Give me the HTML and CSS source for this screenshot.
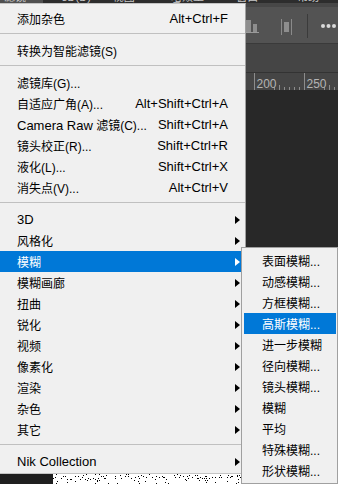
FILE: index.html
```html
<!DOCTYPE html>
<html lang="zh-CN">
  <head>
    <meta charset="UTF-8" />
    <link rel="stylesheet" href="styles.css">
  </head>
  <body>
    <!-- Photoshop workspace behind the menus -->
    <div class="app">
      <div class="menubar">
        <span class="mb-item active">滤镜(T)</span>
        <span class="mb-item">3D(D)</span>
        <span class="mb-item">视图(V)</span>
        <span class="mb-item">增效工具</span>
        <span class="mb-item">窗口(W)</span>
        <span class="mb-item">帮助(H)</span>
      </div>
      <div class="toolbar">
        <svg width="338" height="36" viewBox="0 0 338 36">
          <rect x="245" y="13" width="6" height="12" fill="#8e8e8e" />
          <rect x="253" y="17" width="4" height="8" fill="#8e8e8e" />
          <line x1="243" y1="25.5" x2="259" y2="25.5" stroke="#9a9a9a" />
          <line x1="281.5" y1="12" x2="281.5" y2="28" stroke="#8a8a8a" />
          <line x1="291.5" y1="12" x2="291.5" y2="28" stroke="#8a8a8a" />
          <rect x="284" y="15" width="5" height="10" fill="#8e8e8e" />
          <line x1="307.5" y1="7" x2="307.5" y2="31" stroke="#3b3b3b" />
          <circle cx="323" cy="19" r="2" fill="#dadada" />
          <circle cx="328.5" cy="19" r="2" fill="#dadada" />
          <circle cx="334" cy="19" r="2" fill="#dadada" />
        </svg>
      </div>
      <div class="options"></div>
      <div class="ruler">
        <svg width="338" height="17" viewBox="0 0 338 17">
          <line x1="254.5" y1="0" x2="254.5" y2="17" stroke="#8c8c8c" />
          <line x1="304.5" y1="0" x2="304.5" y2="17" stroke="#8c8c8c" />
          <g stroke="#8c8c8c">
            <line x1="274.5" y1="14" x2="274.5" y2="17" />
            <line x1="279.5" y1="12" x2="279.5" y2="17" />
            <line x1="284.5" y1="14" x2="284.5" y2="17" />
            <line x1="289.5" y1="14" x2="289.5" y2="17" />
            <line x1="294.5" y1="14" x2="294.5" y2="17" />
            <line x1="299.5" y1="14" x2="299.5" y2="17" />
            <line x1="324.5" y1="14" x2="324.5" y2="17" />
            <line x1="329.5" y1="12" x2="329.5" y2="17" />
            <line x1="334.5" y1="14" x2="334.5" y2="17" />
          </g>
          <text x="256.5" y="15" class="ruler-num">200</text>
          <text x="306.5" y="15" class="ruler-num">250</text>
        </svg>
      </div>
      <div class="canvas">
        <div class="strip">
          <svg class="noise" width="290" height="11">
            <filter id="grain" x="0" y="0" width="100%" height="100%">
              <feTurbulence type="fractalNoise" baseFrequency="0.9" numOctaves="1" seed="7" />
              <feColorMatrix type="matrix" values="1 0 0 0 0  1 0 0 0 0  1 0 0 0 0  0 0 0 0 1" />
              <feComponentTransfer>
                <feFuncR type="discrete" tableValues="0 1 1" />
                <feFuncG type="discrete" tableValues="0 1 1" />
                <feFuncB type="discrete" tableValues="0 1 1" />
              </feComponentTransfer>
            </filter>
            <rect width="290" height="11" filter="url(#grain)" />
          </svg>
        </div>
      </div>
    </div>

    <!-- Filter menu -->
    <div class="menu main">
      <div class="item"><span class="label">添加杂色</span><span class="key">Alt+Ctrl+F</span></div>
      <div class="sep"></div>
      <div class="item"><span class="label">转换为智能滤镜(S)</span></div>
      <div class="sep"></div>
      <div class="item"><span class="label">滤镜库(G)...</span></div>
      <div class="item"><span class="label">自适应广角(A)...</span><span class="key">Alt+Shift+Ctrl+A</span></div>
      <div class="item"><span class="label"><span class="en">Camera Raw</span> 滤镜(C)...</span><span class="key">Shift+Ctrl+A</span></div>
      <div class="item"><span class="label">镜头校正(R)...</span><span class="key">Shift+Ctrl+R</span></div>
      <div class="item"><span class="label">液化(L)...</span><span class="key">Shift+Ctrl+X</span></div>
      <div class="item"><span class="label">消失点(V)...</span><span class="key">Alt+Ctrl+V</span></div>
      <div class="sep"></div>
      <div class="item"><span class="label"><span class="en">3D</span></span><span class="arrow"></span></div>
      <div class="item"><span class="label">风格化</span><span class="arrow"></span></div>
      <div class="item active"><span class="label">模糊</span><span class="arrow"></span></div>
      <div class="item"><span class="label">模糊画廊</span><span class="arrow"></span></div>
      <div class="item"><span class="label">扭曲</span><span class="arrow"></span></div>
      <div class="item"><span class="label">锐化</span><span class="arrow"></span></div>
      <div class="item"><span class="label">视频</span><span class="arrow"></span></div>
      <div class="item"><span class="label">像素化</span><span class="arrow"></span></div>
      <div class="item"><span class="label">渲染</span><span class="arrow"></span></div>
      <div class="item"><span class="label">杂色</span><span class="arrow"></span></div>
      <div class="item"><span class="label">其它</span><span class="arrow"></span></div>
      <div class="sep"></div>
      <div class="item"><span class="label"><span class="en">Nik Collection</span></span><span class="arrow"></span></div>
    </div>

    <!-- Blur submenu -->
    <div class="menu sub">
      <div class="item"><span class="label">表面模糊...</span></div>
      <div class="item"><span class="label">动感模糊...</span></div>
      <div class="item"><span class="label">方框模糊...</span></div>
      <div class="item active"><span class="label">高斯模糊...</span></div>
      <div class="item"><span class="label">进一步模糊</span></div>
      <div class="item"><span class="label">径向模糊...</span></div>
      <div class="item"><span class="label">镜头模糊...</span></div>
      <div class="item"><span class="label">模糊</span></div>
      <div class="item"><span class="label">平均</span></div>
      <div class="item"><span class="label">特殊模糊...</span></div>
      <div class="item"><span class="label">形状模糊...</span></div>
    </div>
  </body>
</html>
```

FILE: styles.css
```css
* {
  box-sizing: border-box;
}
body {
  margin: 0;
  width: 338px;
  height: 484px;
  overflow: hidden;
  background: #282828;
  font-family: "Liberation Sans", "Noto Sans CJK SC", sans-serif;
  font-size: 12px;
  color: #000;
}
svg {
  display: block;
}

/* workspace */
.app {
  display: flex;
  flex-direction: column;
  height: 484px;
}
.menubar {
  height: 3px;
  overflow: hidden;
  background: #2d2d2d;
  display: flex;
  align-items: flex-start;
  gap: 14px;
  color: #c8c8c8;
  font-size: 11px;
  line-height: 11px;
}
.mb-item {
  margin-top: -8px;
  padding: 0 4px;
}
.mb-item.active {
  background: #505050;
}
.toolbar {
  height: 41px;
  background: #535353;
  border-top: 4px solid #474747;
  border-bottom: 1px solid #3a3a3a;
}
.options {
  height: 29px;
  background: #454545;
  border-bottom: 1px solid #333;
}
.ruler {
  height: 17px;
  background: #454545;
}
.ruler-num {
  font-family: "Liberation Sans", sans-serif;
  font-size: 12px;
  fill: #b4b4b4;
}
.canvas {
  flex: 1;
  display: flex;
  flex-direction: column;
  justify-content: flex-end;
  background: #282828;
}
.strip {
  height: 11px;
  background: #1f1f1f;
  padding-left: 53px;
}

/* menus */
.menu {
  position: absolute;
  background: #f0f0f0;
}
.main {
  left: 0;
  top: 3px;
  width: 246px;
  padding: 4px 0 1px;
  border: 1px solid #c4c4c4;
  border-left: 0;
  border-right-color: #a0a0a0;
}
.sub {
  left: 241px;
  top: 247px;
  width: 97px;
  padding: 2px 1px 2px 2px;
  border: 1px solid #a0a0a0;
}
.item {
  display: flex;
  align-items: center;
  height: 21px;
  padding: 0 5px 0 17px;
  white-space: nowrap;
}
.sub .item {
  padding-left: 18px;
}
.item.active {
  background: #0078d7;
  color: #fff;
}
.en {
  font-size: 13px;
}
.key {
  margin-left: auto;
  margin-right: 12px;
  font-size: 13px;
}
.arrow {
  margin-left: auto;
  width: 0;
  height: 0;
  border-left: 5px solid #000;
  border-top: 4px solid transparent;
  border-bottom: 4px solid transparent;
}
.active .arrow {
  border-left-color: #fff;
}
.sep {
  height: 1px;
  margin: 4px 0 6px;
  background: #c0c0c0;
}
```
